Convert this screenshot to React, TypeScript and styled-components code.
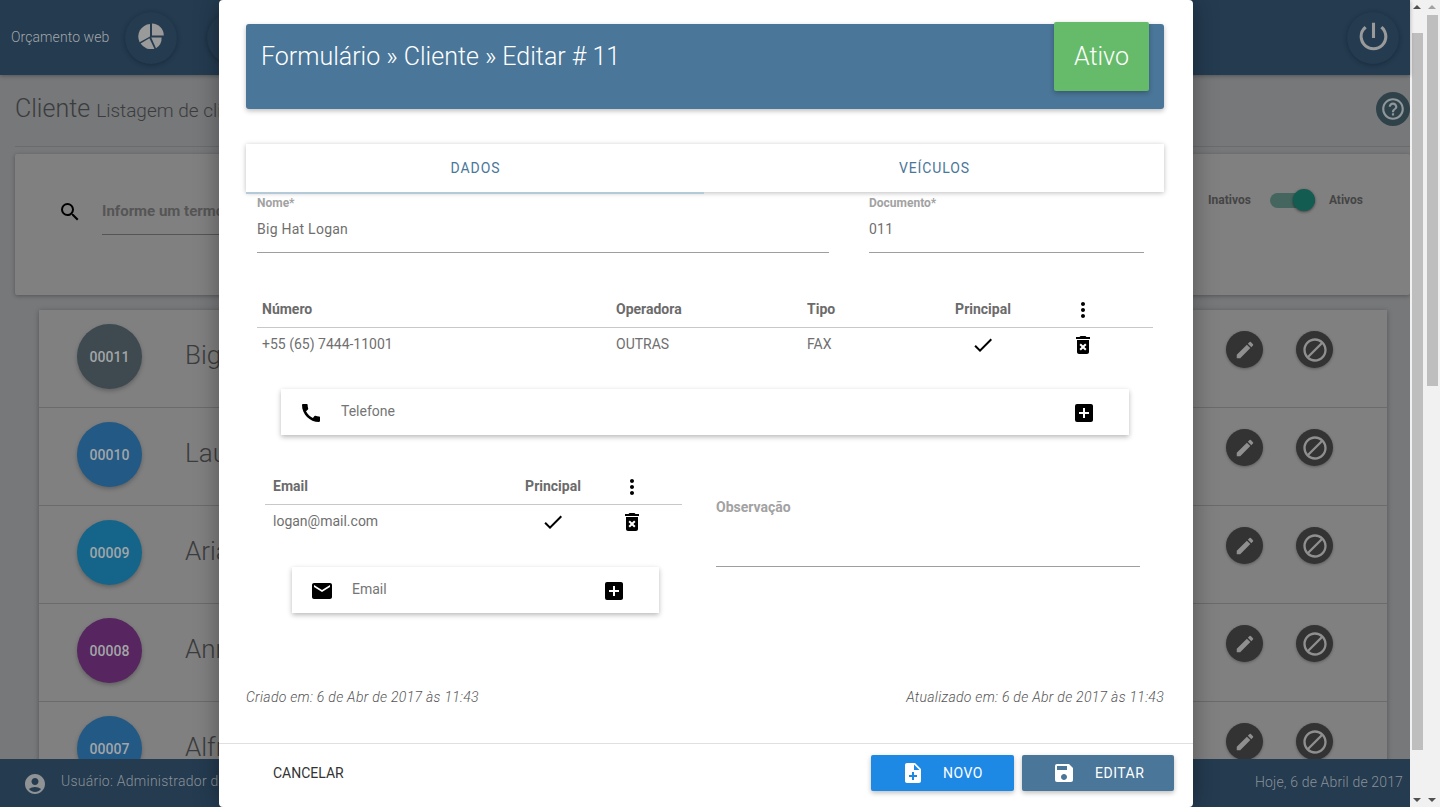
import React from 'react';
import styled, { createGlobalStyle } from 'styled-components';
import {
  MdAccountCircle, MdAddBox, MdBlock, MdCall, MdDeleteForever, MdDone, MdEdit, MdEmail,
  MdHelpOutline, MdMoreVert, MdNoteAdd, MdPowerSettingsNew, MdSave, MdSearch,
} from 'react-icons/md';

const Global = createGlobalStyle`
  html, body { margin: 0; padding: 0; height: 100%; overflow: hidden; }
  body { font-family: Roboto, "Liberation Sans", sans-serif; }
  * { box-sizing: border-box; }
`;

const Shell = styled.div`
  position: relative;
  display: flex;
  width: 1440px;
  height: 807px;
  overflow: hidden;
  background: #f1f1f1;
`;
const PageArea = styled.div`
  width: 1410px;
  height: 807px;
  display: flex;
  flex-direction: column;
  background: #76787a;
`;
const TopBar = styled.header`
  height: 75px;
  flex: none;
  display: flex;
  align-items: center;
  padding: 1px 11px 0 11px;
  background: #243b50;
  box-shadow: 0 1px 4px rgba(0, 0, 0, 0.3);
  position: relative;
  z-index: 2;
`;
const Brand = styled.span`
  font-size: 14px;
  font-weight: 300;
  letter-spacing: 0.08px;
  color: #a3a7aa;
  width: 114px;
  margin-top: -3px;
`;
const RoundNav = styled.div<{ $push?: boolean }>`
  width: 52px;
  height: 52px;
  border-radius: 50%;
  margin-right: 30px;
  margin-left: ${(p) => (p.$push ? 'auto' : '0')};
  display: flex;
  align-items: center;
  justify-content: center;
  background: #243b50;
  color: #9a9a9a;
  box-shadow: 0 1px 5px rgba(0, 0, 0, 0.28);
  svg { margin-top: -4px; }
  &:last-child { margin-right: 0; }
`;
const Main = styled.main`
  flex: 1;
  min-height: 0;
  overflow: hidden;
  padding-top: 15px;
`;
const TitleRow = styled.div`
  height: 57px;
  margin-left: 15px;
  border-bottom: 1px solid #696b6d;
  display: flex;
  align-items: flex-start;
  position: relative;
`;
const PageTitle = styled.h1`
  margin: 0;
  font-size: 25px;
  line-height: 38px;
  font-weight: 300;
  color: #3b3c3d;
`;
const PageSub = styled.small`
  font-size: 19px;
  margin-left: 6px;
  font-weight: 300;
  color: #3b3c3d;
`;
const HelpButton = styled.div`
  position: absolute;
  right: 0;
  top: 2px;
  width: 34px;
  height: 34px;
  border-radius: 50%;
  background: #2f4249;
  color: #8f979a;
  display: flex;
  align-items: center;
  justify-content: center;
`;
const FilterCard = styled.section`
  height: 141px;
  margin: 7px 0 15px 15px;
  background: #808080;
  box-shadow: 0 1px 4px rgba(0, 0, 0, 0.3);
  border-radius: 2px;
  display: flex;
  align-items: flex-start;
  padding: 46px 47px 0 43px;
  color: #000;
`;
const SearchText = styled.div`
  margin-left: 20px;
  width: 500px;
  height: 35px;
  border-bottom: 1px solid #555;
  font-size: 15px;
  font-weight: 700;
  line-height: 22px;
  color: #555;
`;
const ToggleGroup = styled.div`
  display: flex;
  align-items: flex-start;
  margin: -10px 0 0 auto;
`;
const ToggleLabel = styled.span`
  font-size: 12px;
  font-weight: 700;
  line-height: 20px;
  color: #454545;
`;
const Toggle = styled.div`
  width: 45px;
  height: 15px;
  margin: 3px 14px 0 19px;
  border-radius: 8px;
  background: #44665f;
  position: relative;
`;
const ToggleKnob = styled.div`
  position: absolute;
  right: 0;
  top: -4px;
  width: 22px;
  height: 22px;
  border-radius: 50%;
  background: #135c52;
  box-shadow: 0 1px 3px rgba(0, 0, 0, 0.5);
`;
const List = styled.section`
  margin: 0 23px 0 39px;
  background: #808080;
  box-shadow: 0 1px 5px rgba(0, 0, 0, 0.3);
`;
const Row = styled.article`
  height: 98px;
  display: flex;
  align-items: flex-start;
  padding: 14px 54px 0 38px;
  border-bottom: 1px solid #6b6b6b;
`;
const Avatar = styled.div<{ $color: string }>`
  width: 65px;
  height: 65px;
  flex: none;
  border-radius: 50%;
  background: ${(p) => p.$color};
  display: flex;
  align-items: center;
  justify-content: center;
  font-size: 14px;
  font-weight: 500;
  color: #a2a5a7;
  box-shadow: 0 2px 4px rgba(0, 0, 0, 0.25);
`;
const RowName = styled.div`
  margin-left: 43px;
  margin-top: 13px;
  font-size: 26px;
  line-height: 36px;
  font-weight: 300;
  color: #3b3c3d;
  flex: 1;
`;
const RoundAction = styled.div`
  width: 37px;
  height: 37px;
  margin-top: 7px;
  margin-left: 33px;
  border-radius: 50%;
  background: #333;
  color: #8f8f8f;
  display: flex;
  align-items: center;
  justify-content: center;
  box-shadow: 0 1px 3px rgba(0, 0, 0, 0.3);
`;
const BottomBar = styled.footer`
  height: 48px;
  flex: none;
  display: flex;
  align-items: center;
  padding: 0 7px 2px 23px;
  background: #243b50;
  color: #8a9198;
  position: relative;
  z-index: 2;
`;
const BottomUser = styled.div`
  display: flex;
  align-items: center;
  gap: 14px;
  font-size: 14px;
  flex: 1;
  svg { color: #8f9396; margin-top: 4px; }
  span { font-weight: 300; letter-spacing: 0.25px; margin-top: -2px; }
`;
const BottomDate = styled.div`
  font-size: 14px;
  font-weight: 300;
  letter-spacing: 0.15px;
`;

const Scroll = styled.aside`
  width: 15px;
  height: 807px;
  flex: none;
  position: relative;
  background: #f1f1f1;
`;
const Thumb = styled.div<{ $top: number; $h: number }>`
  position: absolute;
  left: 2px;
  width: 11px;
  top: ${(p) => p.$top}px;
  height: ${(p) => p.$h}px;
  background: #bebebe;
`;
const Arrow = styled.div<{ $down?: boolean; $faint?: boolean }>`
  position: absolute;
  left: 3px;
  width: 0;
  height: 0;
  border-left: 4px solid transparent;
  border-right: 4px solid transparent;
  ${(p) => (p.$down ? 'bottom: 5px;' : 'top: 5px;')}
  ${(p) => (p.$down ? 'border-top' : 'border-bottom')}: 4px solid ${(p) => (p.$faint ? '#a3a3a3' : '#505050')};
`;

const Modal = styled.div`
  position: absolute;
  left: 219px;
  top: 0;
  bottom: 0;
  width: 974px;
  z-index: 5;
  display: flex;
  flex-direction: column;
  background: #fff;
  border-radius: 4px;
  box-shadow: 0 0 24px rgba(0, 0, 0, 0.35);
`;
const ModalBody = styled.div`
  flex: 1;
  min-height: 0;
  padding: 24px 29px 0 27px;
`;
const FormHead = styled.div`
  position: relative;
  height: 85px;
  padding: 15px 15px 0;
  background: #4a7699;
  border-radius: 3px;
  box-shadow: 0 2px 5px rgba(0, 0, 0, 0.26);
`;
const FormTitle = styled.h2`
  margin: 0;
  font-size: 25px;
  line-height: 36px;
  font-weight: 300;
  color: #fff;
`;
const StatusBadge = styled.div`
  position: absolute;
  left: 808px;
  top: -2px;
  width: 95px;
  height: 69px;
  border-radius: 2px;
  background: #66bb6a;
  color: #fff;
  font-size: 25px;
  font-weight: 300;
  line-height: 70px;
  text-align: center;
  box-shadow: 0 2px 5px rgba(0, 0, 0, 0.26);
`;
const Tabs = styled.div`
  display: grid;
  grid-template-columns: 458px 1fr;
  height: 48px;
  margin-top: 35px;
  background: #fff;
  box-shadow: 0 1px 5px rgba(0, 0, 0, 0.26);
`;
const Tab = styled.div<{ $active?: boolean }>`
  font-size: 14px;
  letter-spacing: 0.9px;
  line-height: 48px;
  text-align: center;
  padding-left: 1px;
  color: #4a7699;
  border-bottom: 2px solid ${(p) => (p.$active ? '#b5cad9' : 'transparent')};
`;
const FieldRow = styled.div`
  display: grid;
  grid-template-columns: 572px 275px;
  column-gap: 40px;
  padding: 4px 0 0 11px;
`;
const Field = styled.div`
  height: 57px;
  border-bottom: 1px solid #9e9e9e;
`;
const FieldLabel = styled.div`
  font-size: 12px;
  font-weight: 700;
  line-height: 14px;
  color: #a2a2a2;
`;
const FieldValue = styled.div`
  margin-top: 9px;
  font-size: 14px;
  line-height: 20px;
  letter-spacing: 0.25px;
  color: #6f6f6f;
`;
const Table = styled.div<{ $left: number; $width: number }>`
  margin-left: ${(p) => p.$left}px;
  width: ${(p) => p.$width}px;
`;
const PhoneTable = styled(Table)`
  margin-top: 38px;
`;
const TableHead = styled.div<{ $cols: string; $pad: number }>`
  display: grid;
  grid-template-columns: ${(p) => p.$cols};
  padding: 5px 0 7px ${(p) => p.$pad}px;
  height: 37px;
  border-bottom: 1px solid #c8c8c8;
  align-items: center;
  font-size: 14px;
  font-weight: 700;
  color: #6b6b6b;
`;
const TableRow = styled.div<{ $cols: string; $pad: number }>`
  display: grid;
  grid-template-columns: ${(p) => p.$cols};
  padding-left: ${(p) => p.$pad}px;
  height: 36px;
  align-items: center;
  font-size: 14px;
  font-weight: 400;
  color: #6f6f6f;
  padding-bottom: 4px;
`;
const CenterCell = styled.div`
  display: flex;
  justify-content: center;
  white-space: nowrap;
  color: #000;
  svg { margin-top: 2px; }
`;
const HeadCenter = styled.div`
  display: flex;
  justify-content: center;
  white-space: nowrap;
  color: #6b6b6b;
`;
const AddBar = styled.div<{ $left: number; $width: number; $top: number }>`
  display: flex;
  align-items: center;
  height: 46px;
  margin-left: ${(p) => p.$left}px;
  margin-top: ${(p) => p.$top}px;
  width: ${(p) => p.$width}px;
  padding: 0 33px 0 18px;
  background: #fff;
  color: #000;
  box-shadow: 0 2px 5px rgba(0, 0, 0, 0.28);
  svg { margin-top: 2px; flex: none; }
`;
const AddLabel = styled.span`
  flex: 1;
  margin: -2px 0 0 18px;
  font-size: 14px;
  color: #757575;
`;
const ContactSection = styled.div`
  display: flex;
  margin-top: 33px;
`;
const EmailColumn = styled.div`
  width: 436px;
  flex: none;
`;
const NoteField = styled.div`
  margin-left: 34px;
  width: 424px;
  height: 98px;
  padding-top: 28px;
  margin-top: 1px;
  border-bottom: 1px solid #9e9e9e;
  font-size: 14px;
  font-weight: 700;
  line-height: 20px;
  color: #a2a2a2;
`;
const Dates = styled.div`
  display: flex;
  justify-content: space-between;
  margin-top: 74px;
  font-size: 14px;
  line-height: 20px;
  letter-spacing: 0.29px;
  font-style: italic;
  font-weight: 300;
  color: #555;
`;
const ModalFooter = styled.div`
  height: 64px;
  flex: none;
  display: flex;
  align-items: flex-start;
  gap: 8px;
  padding: 11px 19px 0 54px;
  border-top: 1px solid #e0e0e0;
`;
const CancelButton = styled.div`
  margin-right: auto;
  font-size: 14px;
  line-height: 36px;
  color: #333;
`;
const ActionButton = styled.div<{ $color: string; $width: number; $gap: number; $pad: number }>`
  width: ${(p) => p.$width}px;
  height: 36px;
  display: flex;
  align-items: center;
  gap: ${(p) => p.$gap}px;
  padding-left: ${(p) => p.$pad}px;
  background: ${(p) => p.$color};
  color: #fff;
  font-size: 14px;
  letter-spacing: 0.5px;
  border-radius: 2px;
  box-shadow: 0 2px 5px rgba(0, 0, 0, 0.26);
`;

const PieIcon = () => (
  <svg width="26" height="26" viewBox="0 0 26 26" fill="#9a9a9a" aria-hidden="true">
    <path d="M14 0.6A12 12 0 0 1 25.8 12.4H14Z" />
    <path d="M12 1A12.6 12.6 0 0 0 1.6 19.2L12 13.4Z" />
    <path d="M11.4 15.2L2.6 20.6A12.6 12.6 0 0 0 16.4 25.8Z" />
    <path d="M13.2 14.4H23.6A12 12 0 0 1 18 25.2Z" />
  </svg>
);

const phoneCols = '354px 191px 148px 56px 144px';
const mailCols = '252px 56px 102px';

const people = [
  { id: '00011', name: 'Big Hat Logan', color: '#3e4a50' },
  { id: '00010', name: 'Laura', color: '#235985' },
  { id: '00009', name: 'Ariana', color: '#15658a' },
  { id: '00008', name: 'Anne', color: '#57255f' },
  { id: '00007', name: 'Alfredo', color: '#235985' },
];

export default function App() {
  return (
    <Shell>
      <Global />
      <PageArea>
        <TopBar>
          <Brand>Orçamento web</Brand>
          <RoundNav><PieIcon /></RoundNav>
          <RoundNav />
          <RoundNav $push><MdPowerSettingsNew size={37} /></RoundNav>
        </TopBar>
        <Main>
          <TitleRow>
            <PageTitle>Cliente<PageSub>Listagem de clientes</PageSub></PageTitle>
            <HelpButton><MdHelpOutline size={26} /></HelpButton>
          </TitleRow>
          <FilterCard>
            <MdSearch size={24} />
            <SearchText>Informe um termo</SearchText>
            <ToggleGroup>
              <ToggleLabel>Inativos</ToggleLabel>
              <Toggle><ToggleKnob /></Toggle>
              <ToggleLabel>Ativos</ToggleLabel>
            </ToggleGroup>
          </FilterCard>
          <List>
            {people.map((p) => (
              <Row key={p.id}>
                <Avatar $color={p.color}>{p.id}</Avatar>
                <RowName>{p.name}</RowName>
                <RoundAction><MdEdit size={22} /></RoundAction>
                <RoundAction><MdBlock size={28} /></RoundAction>
              </Row>
            ))}
          </List>
        </Main>
        <BottomBar>
          <BottomUser><MdAccountCircle size={24} /><span>Usuário: Administrador do sistema</span></BottomUser>
          <BottomDate>Hoje, 6 de Abril de 2017</BottomDate>
        </BottomBar>
      </PageArea>
      <Scroll>
        <Arrow />
        <Thumb $top={33} $h={717} />
        <Arrow $down />
      </Scroll>
      <Scroll>
        <Arrow $faint />
        <Thumb $top={15} $h={371} />
        <Arrow $down />
      </Scroll>

      <Modal>
        <ModalBody>
          <FormHead>
            <FormTitle>Formulário » Cliente » Editar # 11</FormTitle>
            <StatusBadge>Ativo</StatusBadge>
          </FormHead>
          <Tabs>
            <Tab $active>DADOS</Tab>
            <Tab>VEÍCULOS</Tab>
          </Tabs>
          <FieldRow>
            <Field>
              <FieldLabel>Nome*</FieldLabel>
              <FieldValue>Big Hat Logan</FieldValue>
            </Field>
            <Field>
              <FieldLabel>Documento*</FieldLabel>
              <FieldValue>011</FieldValue>
            </Field>
          </FieldRow>
          <PhoneTable $left={11} $width={896}>
            <TableHead $cols={phoneCols} $pad={5}>
              <span>Número</span>
              <span>Operadora</span>
              <span>Tipo</span>
              <HeadCenter>Principal</HeadCenter>
              <CenterCell><MdMoreVert size={24} /></CenterCell>
            </TableHead>
            <TableRow $cols={phoneCols} $pad={5}>
              <span>+55 (65) 7444-11001</span>
              <span>OUTRAS</span>
              <span>FAX</span>
              <CenterCell><MdDone size={24} /></CenterCell>
              <CenterCell><MdDeleteForever size={24} /></CenterCell>
            </TableRow>
          </PhoneTable>
          <AddBar $left={35} $width={848} $top={25}>
            <MdCall size={24} />
            <AddLabel>Telefone</AddLabel>
            <MdAddBox size={24} />
          </AddBar>
          <ContactSection>
            <EmailColumn>
              <Table $left={19} $width={417}>
                <TableHead $cols={mailCols} $pad={8}>
                  <span>Email</span>
                  <HeadCenter>Principal</HeadCenter>
                  <CenterCell><MdMoreVert size={24} /></CenterCell>
                </TableHead>
                <TableRow $cols={mailCols} $pad={8}>
                  <span>logan@mail.com</span>
                  <CenterCell><MdDone size={24} /></CenterCell>
                  <CenterCell><MdDeleteForever size={24} /></CenterCell>
                </TableRow>
              </Table>
              <AddBar $left={46} $width={367} $top={26}>
                <MdEmail size={24} />
                <AddLabel>Email</AddLabel>
                <MdAddBox size={24} />
              </AddBar>
            </EmailColumn>
            <NoteField>Observação</NoteField>
          </ContactSection>
          <Dates>
            <span>Criado em: 6 de Abr de 2017 às 11:43</span>
            <span>Atualizado em: 6 de Abr de 2017 às 11:43</span>
          </Dates>
        </ModalBody>
        <ModalFooter>
          <CancelButton>CANCELAR</CancelButton>
          <ActionButton $color="#1e88e5" $width={143} $gap={18} $pad={30}><MdNoteAdd size={24} />NOVO</ActionButton>
          <ActionButton $color="#4a7699" $width={152} $gap={19} $pad={30}><MdSave size={24} />EDITAR</ActionButton>
        </ModalFooter>
      </Modal>
    </Shell>
  );
}
